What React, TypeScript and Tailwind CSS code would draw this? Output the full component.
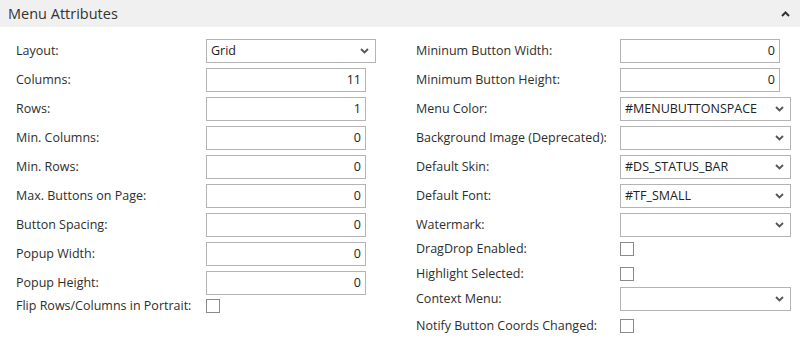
import React from "react";

type Field =
  | { label: string; kind: "input"; value: string; h?: number }
  | { label: string; kind: "select"; value: string; h?: number }
  | { label: string; kind: "check"; h?: number };

const leftFields: Field[] = [
  { label: "Layout:", kind: "select", value: "Grid" },
  { label: "Columns:", kind: "input", value: "11" },
  { label: "Rows:", kind: "input", value: "1" },
  { label: "Min. Columns:", kind: "input", value: "0" },
  { label: "Min. Rows:", kind: "input", value: "0" },
  { label: "Max. Buttons on Page:", kind: "input", value: "0" },
  { label: "Button Spacing:", kind: "input", value: "0" },
  { label: "Popup Width:", kind: "input", value: "0" },
  { label: "Popup Height:", kind: "input", value: "0", h: 28 },
  { label: "Flip Rows/Columns in Portrait:", kind: "check" },
];

const rightFields: Field[] = [
  { label: "Mininum Button Width:", kind: "input", value: "0" },
  { label: "Minimum Button Height:", kind: "input", value: "0" },
  { label: "Menu Color:", kind: "select", value: "#MENUBUTTONSPACE" },
  { label: "Background Image (Deprecated):", kind: "select", value: "" },
  { label: "Default Skin:", kind: "select", value: "#DS_STATUS_BAR" },
  { label: "Default Font:", kind: "select", value: "#TF_SMALL" },
  { label: "Watermark:", kind: "select", value: "" },
  { label: "DragDrop Enabled:", kind: "check", h: 25 },
  { label: "Highlight Selected:", kind: "check", h: 20 },
  { label: "Context Menu:", kind: "select", value: "", h: 32 },
  { label: "Notify Button Coords Changed:", kind: "check" },
];

const ChevronDown = () => (
  <svg width="9" height="6" viewBox="0 0 9 6" className="shrink-0">
    <polyline points="1,1 4.5,4.5 8,1" fill="none" stroke="#555" strokeWidth="1.8" />
  </svg>
);

const Row = ({ f, labelW, inputW, selectW }: { f: Field; labelW: number; inputW: string; selectW: string }) => {
  const h = f.h ?? 29;
  return (
    <div className="flex" style={{ height: h }}>
      <div className="flex items-start">
        <div
          className="flex items-center text-[12.5px] text-[#2e2e2e] whitespace-nowrap"
          style={{ width: labelW, height: f.kind === "check" ? 14 : 24 }}
        >
          {f.label}
        </div>
        {f.kind === "input" && (
          <div className={`${inputW} h-[24px] border border-[#b4b4b4] flex items-center justify-end pr-[4px] text-[12.5px] text-[#222]`}>
            {f.value}
          </div>
        )}
        {f.kind === "select" && (
          <div className={`${selectW} h-[24px] border border-[#b4b4b4] flex items-center justify-between pl-[4px] pr-[6px] text-[12.5px] text-[#222]`}>
            <span>{f.value}</span>
            <ChevronDown />
          </div>
        )}
        {f.kind === "check" && <div className="w-[14px] h-[14px] border border-[#8a8a8a] bg-white" />}
      </div>
    </div>
  );
};

export default function App() {
  return (
    <div className="w-[800px] h-[343px] bg-white font-['Open_Sans',sans-serif] overflow-hidden">
      <div className="h-[27px] bg-[#f0f0f0] flex items-center justify-between pl-2 pr-[10px]">
        <span className="text-[14.5px] text-[#333]">Menu Attributes</span>
        <svg width="9" height="6" viewBox="0 0 9 6">
          <polyline points="1,5 4.5,1.5 8,5" fill="none" stroke="#333" strokeWidth="2" />
        </svg>
      </div>
      <div className="flex pt-[12px]">
        <div className="w-[400px] pl-4">
          {leftFields.map((f) => (
            <Row key={f.label} f={f} labelW={190} inputW="w-[160px]" selectW="w-[170px]" />
          ))}
        </div>
        <div className="w-[400px] pl-4">
          {rightFields.map((f) => (
            <Row key={f.label} f={f} labelW={204} inputW="w-[160px]" selectW="w-[171px]" />
          ))}
        </div>
      </div>
    </div>
  );
}
